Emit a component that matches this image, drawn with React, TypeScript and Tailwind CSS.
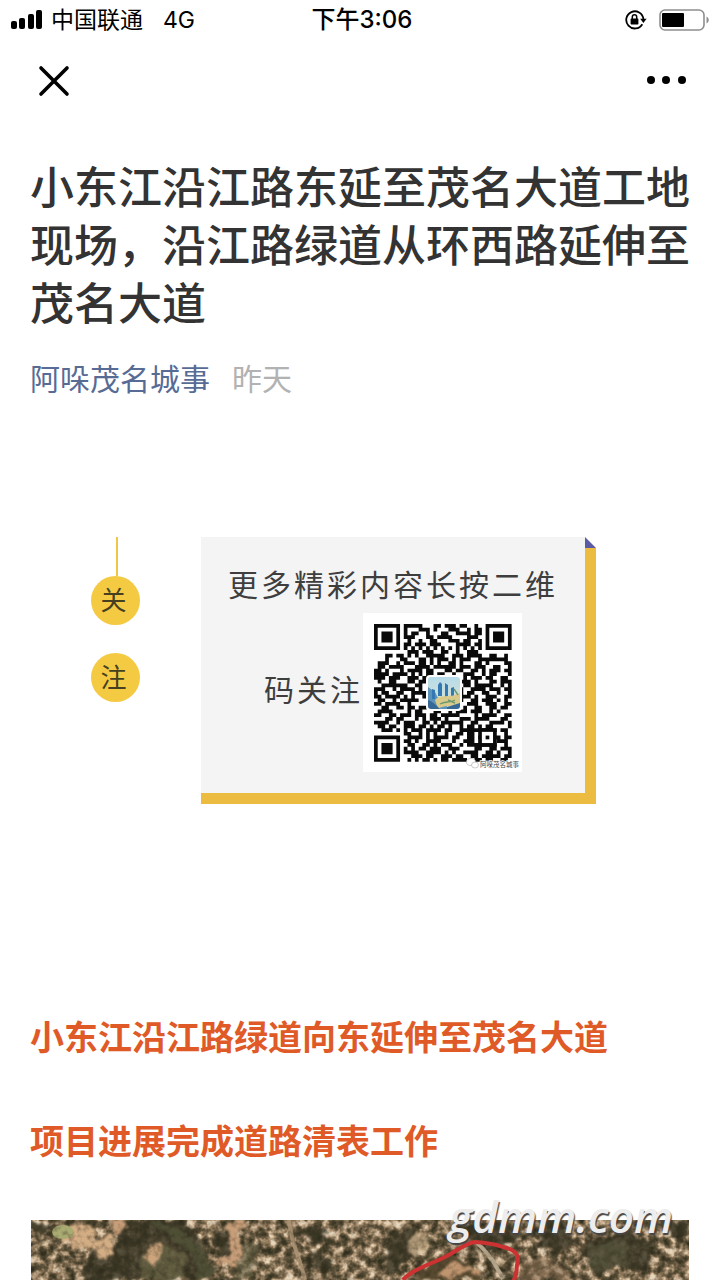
const QR_ROWS = [
  '1111111011111000110111011001001111111',
  '1000001010001110100011100101101000001',
  '1011101010110010001100111101101011101',
  '1011101011100011011110000111001011101',
  '1011101001001001100011101100101011101',
  '1000001011011101110000111101101000001',
  '1111111010101010101010101010101111111',
  '0000000001110111001100100111000000000',
  '0001101101010011111001110111100110010',
  '0001000110001101011101011100111111110',
  '0111001011101101010011010001101000011',
  '0110111100011110111111011101110011001',
  '1101000101111011000110110011010111011',
  '1111011110101011011001001110010110001',
  '1110111001110110000001101011101100110',
  '0100110001101110000000111101000110111',
  '0011111110011010000000001101111100101',
  '1110010111101000000000010011110111011',
  '1011001100111110000000110110011001001',
  '1101111010100110000000011101001110011',
  '0110010111110011000000110011011101010',
  '1101111001000011110010100111001110011',
  '0011001101101110011111001001100110110',
  '0111100001011000110010111011100101000',
  '1100110111011101101111100001011110011',
  '0001101100010101110100011101111000110',
  '1111001011100110101111110011000111101',
  '0110110011101101011010010110101100001',
  '0011101010111011110110011111111110110',
  '0000000011001010100100110110001100010',
  '1111111001111010111101100110101011011',
  '1000001011010011110001001110001001110',
  '1011101001100110101110010111111110010',
  '1011101010101101110011100001100110111',
  '1011101011110011110101001111001101001',
  '1000001000111011001110110011011111011',
  '1111111001010110101101111001101100110',
];

const qrPath = QR_ROWS.map((row, y) =>
  row
    .split('')
    .map((cell, x) => (cell === '1' ? `M${x} ${y}h1v1h-1z` : ''))
    .join('')
).join('');

const FOLLOW = ['关', '注'];

const HEADINGS = ['小东江沿江路绿道向东延伸至茂名大道', '项目进展完成道路清表工作'];

function StatusBar() {
  return (
    <div className="grid h-10 grid-cols-[1fr_auto_1fr] items-center px-[11px] text-[23px] leading-none text-black">
      <div className="flex items-center gap-2">
        <svg width="32" height="20" viewBox="0 0 32 20" aria-hidden>
          <rect x="0" y="11" width="6" height="8" rx="2" />
          <rect x="8" y="8" width="6" height="11" rx="2" />
          <rect x="17" y="4" width="6" height="15" rx="2" />
          <rect x="25" y="0" width="6" height="19" rx="2" />
        </svg>
        <span>中国联通</span>
        <span className="ml-3">4G</span>
      </div>
      <time className="pl-1 text-[24px] font-medium">下午3:06</time>
      <div className="flex items-center justify-end gap-3">
        <svg width="22" height="20" viewBox="0 0 22 20" fill="none" stroke="#000" aria-hidden>
          <path d="M17.3 14.2A8.6 8.6 0 1 1 18.4 9" strokeWidth="1.8" />
          <path d="M15.2 8.8h6.4l-3.2 4.2z" fill="#000" stroke="none" />
          <rect x="5.6" y="8.6" width="7.8" height="6" rx="0.8" fill="#000" stroke="none" />
          <path d="M7.3 9V7a2.2 2.2 0 0 1 4.4 0v2" strokeWidth="1.5" />
        </svg>
        <svg width="50" height="22" viewBox="0 0 50 22" aria-hidden>
          <rect x="1" y="1" width="44" height="20" rx="5" fill="none" stroke="#8e8e8e" strokeWidth="1.6" />
          <rect x="3" y="4" width="22" height="14" rx="1" />
          <path d="M47.5 7.5c3 1.6 3 5.4 0 7z" fill="#8e8e8e" />
        </svg>
      </div>
    </div>
  );
}

function NavBar() {
  return (
    <nav className="flex h-20 items-center justify-between px-8">
      <button type="button" aria-label="关闭" className="p-1">
        <svg width="34" height="34" viewBox="0 0 34 34" stroke="#000" strokeWidth="3.6" strokeLinecap="round">
          <path d="M5 5l26 26M31 5L5 31" />
        </svg>
      </button>
      <button type="button" aria-label="更多" className="py-3">
        <svg width="42" height="10" viewBox="0 0 42 10">
          <circle cx="5" cy="5" r="4" />
          <circle cx="20" cy="5" r="4" />
          <circle cx="36" cy="5" r="4" />
        </svg>
      </button>
    </nav>
  );
}

function QrCode() {
  return (
    <svg className="tracking-normal" width="159" height="159" viewBox="0 0 159 159" role="img" aria-label="二维码">
      <defs>
        <linearGradient id="sky" x1="0" y1="0" x2="0" y2="1">
          <stop offset="0" stopColor="#b4dbed" />
          <stop offset="1" stopColor="#e2e3c8" />
        </linearGradient>
        <clipPath id="logo">
          <rect x="65" y="64" width="32" height="32" rx="3" />
        </clipPath>
        <filter id="soft">
          <feGaussianBlur stdDeviation="0.6" />
        </filter>
      </defs>
      <rect width="159" height="159" fill="#fff" />
      <g transform="translate(11 11) scale(3.72)">
        <path d={qrPath} fill="#0a0a0a" />
        <rect x="28" y="28" width="5" height="5" fill="#0a0a0a" />
        <rect x="29" y="29" width="3" height="3" fill="#fff" />
        <rect x="30" y="30" width="1" height="1" fill="#0a0a0a" />
      </g>
      <rect x="63" y="62" width="36" height="36" rx="4" fill="#fff" />
      <g clipPath="url(#logo)">
        <g transform="translate(-2 -1)" filter="url(#soft)">
          <rect x="65" y="63" width="36" height="36" fill="url(#sky)" />
          <path d="M67 75l7 5 4 8 8 2v8H67z" fill="#5c93b8" />
          <path d="M77 73l2-3 2 2v12h-4zM84 71l3 2v12h-3zM90 76l3-1v10h-3zM71 77l3 1v9h-3z" fill="#3179b4" />
          <path d="M74 88c7-7 13-1 25-7v10c-9 5-15 1-22 6z" fill="#d9c98b" />
          <path d="M79 92c5-3 10-1 15-4M93 77l4 6M87 88l7 3" stroke="#6c9a6e" strokeWidth="1.4" fill="none" />
          <path d="M67 88c4 1 8 5 12 9H67zM86 95l13-4v6H86z" fill="#356795" />
        </g>
      </g>
      <g fill="#fff" stroke="#aaa" strokeWidth="0.6">
        <ellipse cx="108" cy="149" rx="4.5" ry="3.5" />
        <ellipse cx="112" cy="152" rx="3.5" ry="3" />
      </g>
      <text x="117" y="154" fontSize="6.5" fill="#444" stroke="#fff" strokeWidth="1.5" paintOrder="stroke">
        阿哚茂名城事
      </text>
    </svg>
  );
}

function FollowCard() {
  return (
    <section className="mt-[136px] flex pl-[61px] pr-[94px]">
      <div className="flex w-[49px] shrink-0 flex-col items-center">
        <span className="ml-[2px] h-[39px] w-[2px] bg-[#f0c648]" />
        {FOLLOW.map((char) => (
          <span
            key={char}
            className="mb-[28px] flex size-[49px] items-center justify-center rounded-full bg-[#f5ca43] pr-1 text-[26px] leading-none text-[#45401f]"
          >
            {char}
          </span>
        ))}
      </div>
      <div className="relative ml-[61px] flex-1 bg-[#ecbc40] pb-[11px] pr-[11px]">
        <span className="absolute right-0 top-0 size-[11px] bg-white">
          <svg width="11" height="11" viewBox="0 0 11 11" aria-hidden>
            <path d="M0 0l11 11H0z" fill="#5a5aa5" />
          </svg>
        </span>
        <div className="h-64 bg-[#f4f4f4] pt-5 text-[30px] tracking-widest text-[#3e3e3e]">
          <p className="text-center leading-[56px]">更多精彩内容长按二维</p>
          <p className="flex items-center justify-center">
            <span className="pb-1">码关注</span>
            <QrCode />
          </p>
        </div>
      </div>
    </section>
  );
}

function AerialPhoto() {
  return (
    <svg className="block h-[60px] w-full" viewBox="0 0 658 60" preserveAspectRatio="xMidYMin slice" role="img" aria-label="航拍图">
      <defs>
        <filter id="ground" x="0" y="0" width="100%" height="100%" colorInterpolationFilters="sRGB">
          <feTurbulence type="fractalNoise" baseFrequency="0.11" numOctaves="3" seed="8" />
          <feColorMatrix values="1.7 0 0 0 -0.32  1.7 0 0 0 -0.32  1.7 0 0 0 -0.32  0 0 0 0 1" />
          <feComponentTransfer>
            <feFuncR type="table" tableValues="0.2 0.24 0.3 0.36 0.47 0.6 0.74 0.87 0.9" />
            <feFuncG type="table" tableValues="0.19 0.22 0.27 0.32 0.4 0.51 0.64 0.78 0.84" />
            <feFuncB type="table" tableValues="0.13 0.15 0.18 0.23 0.3 0.39 0.52 0.66 0.74" />
          </feComponentTransfer>
          <feGaussianBlur stdDeviation="0.4" />
        </filter>
        <filter id="rough" x="-5%" y="-20%" width="110%" height="140%" colorInterpolationFilters="sRGB">
          <feTurbulence type="fractalNoise" baseFrequency="0.07" numOctaves="3" seed="3" result="noise" />
          <feDisplacementMap in="SourceGraphic" in2="noise" scale="18" xChannelSelector="R" yChannelSelector="G" />
          <feGaussianBlur stdDeviation="0.8" />
        </filter>
        <filter id="grain" x="0" y="0" width="100%" height="100%" colorInterpolationFilters="sRGB">
          <feTurbulence type="fractalNoise" baseFrequency="0.16" numOctaves="3" seed="21" />
          <feColorMatrix values="0 0 0 0 0.16  0 0 0 0 0.14  0 0 0 0 0.09  1.8 0 0 0 -0.8" />
        </filter>
      </defs>
      <rect width="658" height="60" filter="url(#ground)" />
      <g filter="url(#rough)">
        <g fill="#343121" opacity="0.8">
          <path d="M0 0h18v12H0zM92 0h60l22 24 10 36H52l6-30 28-6z" />
          <path d="M185 10l15 3-3 14 8 10-22 2 4-12zM262 6l30 4 10 12-24-2zM288 30l16 8-10 16-14-4zM505 0h22l16 20-20 14-14-10zM556 20l40-12 30 16-10 22-50 6-16-16z" />
          <path d="M358 14l28-6 10 14-14 12-20 20-10-16zM424 4h60l10 14-34 14-24-10zM630 0h28v14l-16 8z" />
        </g>
        <path d="M118 2l26 4c20 16 38 22 36 54h-12c0-22-12-34-50-58z" fill="#525339" opacity="0.9" />
        <path d="M110 36c10-14 34-12 44 2v22h-46z" fill="#75724f" opacity="0.6" />
        <path d="M212 22c8-6 14 0 16 8l-4 30h-24zM556 24c14-8 38-4 44 8s-18 22-40 16z" fill="#5f5e42" opacity="0.6" />
        <path d="M38 4l22-2 4 14 14-2 6 22-10 4-10-14-22 4-12-8z" fill="#d3ad84" />
        <path d="M80 0h14l-2 12-10 6zM196 2h16l-2 22-4 24h-20l-2-6 14-4z" fill="#c79e79" />
        <path d="M118 24h12l2 8-12 14-4-8z" fill="#cca57d" />
        <path d="M384 8l14 8-6 20-14-4z" fill="#cbb08b" opacity="0.8" />
        <path d="M386 60c6-16 14-24 30-26l24 6 6 20z" fill="#57492f" />
        <path d="M410 54l12-10 20 0 4 8-20 2-8 6z" fill="#bf956f" />
        <path d="M490 46c24-14 34-12 50 14h-50z" fill="#836a50" opacity="0.6" />
      </g>
      <ellipse cx="32" cy="12" rx="11" ry="7" fill="#a9ab72" />
      <path d="M258 0c2 24 10 34 16 60" stroke="#ad9476" strokeWidth="4" fill="none" opacity="0.9" />
      <path d="M446 23c10 8 18 20 26 36" stroke="#b5a78d" strokeWidth="4" fill="none" />
      <rect width="658" height="60" filter="url(#grain)" opacity="0.5" />
      <path
        d="M372 60c8-10 28-16 42-23 12-6 20-14 30-15 14 1 20 2 28 5 16 3 16 12 14 18-1 5 1 8-4 17"
        stroke="#cd3232"
        strokeWidth="4"
        fill="none"
      />
    </svg>
  );
}

export default function App() {
  return (
    <main className="min-h-screen overflow-hidden bg-white font-['Inter','Noto_Sans_CJK_SC',sans-serif]">
      <header>
        <StatusBar />
        <NavBar />
      </header>

      <article className="px-[30px] pt-[39px]">
        <h1 className="text-[44px] font-medium leading-[58px] text-[#333]">
          小东江沿江路东延至茂名大道工地现场，沿江路绿道从环西路延伸至茂名大道
        </h1>
        <p className="mt-6 flex gap-[22px] text-[30px] leading-[44px]">
          <a href="#author" className="text-[#576b95]">
            阿哚茂名城事
          </a>
          <span className="text-[#b2b2b2]">昨天</span>
        </p>

        <FollowCard />

        <section className="mt-[182px]">
          {HEADINGS.map((heading) => (
            <h2 key={heading} className="text-[34px] font-bold leading-[104px] text-[#e05a28]">
              {heading}
            </h2>
          ))}
        </section>

        <figure className="relative mx-px mt-[26px]">
          <AerialPhoto />
          <figcaption className="absolute -top-8 right-4 font-['Open_Sans',sans-serif] text-[44px] font-semibold italic leading-[56px] text-[#ededed] [text-shadow:1px_2px_1px_#444]">
            gdmm.com
          </figcaption>
        </figure>
      </article>
    </main>
  );
}
